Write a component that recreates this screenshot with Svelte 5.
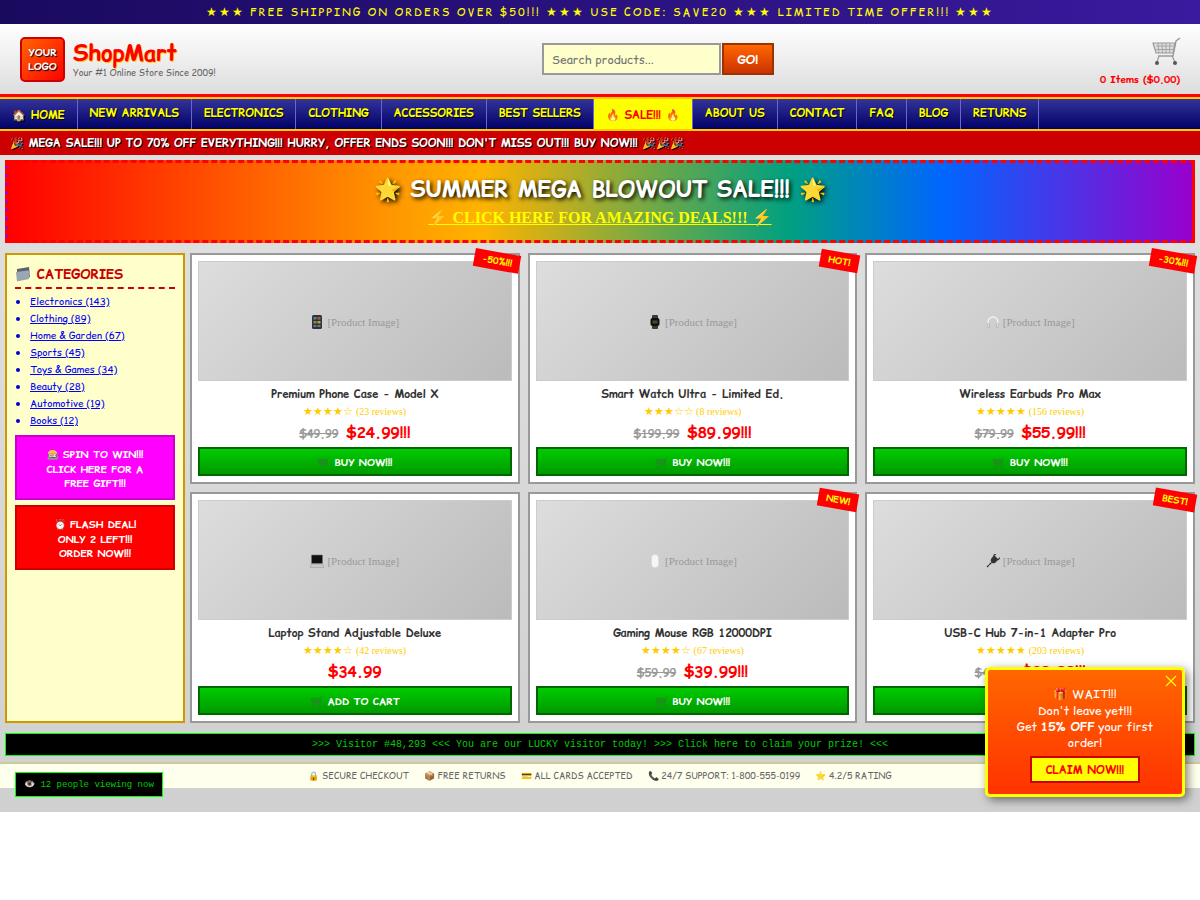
<script>
  const navItems = ['🏠 HOME', 'NEW ARRIVALS', 'ELECTRONICS', 'CLOTHING', 'ACCESSORIES', 'BEST SELLERS', '🔥 SALE!!! 🔥', 'ABOUT US', 'CONTACT', 'FAQ', 'BLOG', 'RETURNS'];

  const categories = ['Electronics (143)', 'Clothing (89)', 'Home & Garden (67)', 'Sports (45)', 'Toys & Games (34)', 'Beauty (28)', 'Automotive (19)', 'Books (12)'];

  const promoParts = ['FREE SHIPPING ON ORDERS OVER $50!!!', 'USE CODE: SAVE20', 'LIMITED TIME OFFER!!!'];

  const products = [
    { icon: 'phone', name: 'Premium Phone Case - Model X', stars: '★★★★☆', reviews: 23, old: '$49.99', price: '$24.99!!!', badge: '-50%!!!', cta: 'BUY NOW!!!' },
    { icon: 'watch', name: 'Smart Watch Ultra - Limited Ed.', stars: '★★★☆☆', reviews: 8, old: '$199.99', price: '$89.99!!!', badge: 'HOT!', cta: 'BUY NOW!!!' },
    { icon: 'phones', name: 'Wireless Earbuds Pro Max', stars: '★★★★★', reviews: 156, old: '$79.99', price: '$55.99!!!', badge: '-30%!!!', cta: 'BUY NOW!!!' },
    { icon: 'laptop', name: 'Laptop Stand Adjustable Deluxe', stars: '★★★★☆', reviews: 42, old: '', price: '$34.99', badge: '', cta: 'ADD TO CART' },
    { icon: 'mouse', name: 'Gaming Mouse RGB 12000DPI', stars: '★★★★☆', reviews: 67, old: '$59.99', price: '$39.99!!!', badge: 'NEW!', cta: 'BUY NOW!!!' },
    { icon: 'plug', name: 'USB-C Hub 7-in-1 Adapter Pro', stars: '★★★★★', reviews: 203, old: '$49.99', price: '$29.99!!!', badge: 'BEST!', cta: 'BUY NOW!!!' }
  ];

  const trust = ['🔒 SECURE CHECKOUT', '📦 FREE RETURNS', '💳 ALL CARDS ACCEPTED', '📞 24/7 SUPPORT: 1-800-555-0199', '⭐ 4.2/5 RATING'];
</script>

{#snippet cart(size, wire, wheel)}
  <svg class="cart-svg" width={size} height={size} viewBox="0 0 30 30" fill="none">
    <path d="M29 3 L25 6 L22 21 H7" stroke={wire} stroke-width="1.4" />
    <path d="M2 8 H24 L22 18 H5 Z" fill={wire} fill-opacity="0.25" stroke={wire} stroke-width="1.2" />
    <path d="M7 8 L8 18 M11 8 L11.5 18 M15 8 L15 18 M19 8 L18.5 18 M5 11 H23 M5 14.5 H22.5" stroke={wire} stroke-width="0.8" />
    <path d="M8 21 L6 27 M21 21 L24 27" stroke={wire} stroke-width="1.2" />
    <circle cx="6" cy="28" r="2" fill={wheel} />
    <circle cx="24" cy="28" r="2" fill={wheel} />
  </svg>
{/snippet}

{#snippet productIcon(kind)}
  <svg class="product-svg" width="14" height="14" viewBox="0 0 14 14">
    {#if kind === 'phone'}
      <rect x="2" y="0" width="10" height="14" rx="1.5" fill="#333" />
      <rect x="3.5" y="2" width="3" height="2.5" fill="#5a7fa8" />
      <rect x="7.5" y="2" width="3" height="2.5" fill="#a85a4a" />
      <rect x="3.5" y="6" width="3" height="2.5" fill="#6a9a5a" />
      <rect x="7.5" y="6" width="3" height="2.5" fill="#c0a040" />
      <rect x="3.5" y="10" width="3" height="2" fill="#7a6a9a" />
      <rect x="7.5" y="10" width="3" height="2" fill="#4a8a8a" />
    {:else if kind === 'watch'}
      <rect x="4" y="0" width="6" height="14" rx="1" fill="#3a3a3a" />
      <rect x="2.5" y="3" width="9" height="8" rx="2" fill="#111" />
      <rect x="4.5" y="5.5" width="5" height="3" fill="#4a4a2a" />
    {:else if kind === 'phones'}
      <path d="M2 10 V7 A5 5 0 0 1 12 7 V10" fill="none" stroke="#f2f2f2" stroke-width="1.4" />
      <path d="M1.5 8.5 L3.5 9 L3.5 13 L2 12.5 Z M12.5 8.5 L10.5 9 L10.5 13 L12 12.5 Z" fill="#ececec" stroke="#999" stroke-width="0.5" />
    {:else if kind === 'laptop'}
      <rect x="1.5" y="1" width="11" height="8.5" rx="0.6" fill="#111" stroke="#777" stroke-width="0.6" />
      <path d="M1.5 10 H12.5 L14 13.5 H0 Z" fill="#c8c8c8" stroke="#888" stroke-width="0.4" />
    {:else if kind === 'mouse'}
      <rect x="3.5" y="0.5" width="7" height="13" rx="3.5" fill="#f6f6f6" stroke="#d8d8d8" stroke-width="0.5" />
    {:else}
      <path d="M8 1 L12.5 5.5 L9 9 A3 3 0 0 1 5 5 Z" fill="#333" />
      <path d="M7.5 1.5 L10 0 M12 6 L14 3.5 M5.5 8.5 L1 13" stroke="#333" stroke-width="1.2" />
      <path d="M2 10 L4 12" stroke="#bbb" stroke-width="1" />
    {/if}
  </svg>
{/snippet}

<div class="page">
  <div class="promo">
    <span class="promo-stars">★★★</span>
    {#each promoParts as part}
      {part}{' '}<span class="promo-stars">★★★</span>{' '}
    {/each}
  </div>

  <header class="header">
    <div class="brand">
      <div class="logo">YOUR<br />LOGO</div>
      <div>
        <div class="shop-name">ShopMart</div>
        <div class="tagline">Your #1 Online Store Since 2009!</div>
      </div>
    </div>
    <div class="search">
      <input type="text" placeholder="Search products..." />
      <button>GO!</button>
    </div>
    <div class="cart">
      <div class="cart-icon">{@render cart(30, '#9a9a9a', '#555')}</div>
      <div class="cart-count">0 Items ($0.00)</div>
    </div>
  </header>

  <nav class="nav">
    {#each navItems as item, i}
      <a href="#top" class:sale={i === 6} class:emoji={i === 0 || i === 6}>{item}</a>
    {/each}
  </nav>

  <div class="sale-strip">🎉 MEGA SALE!!! UP TO 70% OFF EVERYTHING!!! HURRY, OFFER ENDS SOON!!! DON'T MISS OUT!!! BUY NOW!!! 🎉🎉🎉</div>

  <div class="banner">
    <div class="banner-title">🌟 SUMMER MEGA BLOWOUT SALE!!! 🌟</div>
    <a href="#top" class="banner-link">⚡ CLICK HERE FOR AMAZING DEALS!!! ⚡</a>
  </div>

  <div class="content">
    <aside class="sidebar">
      <h3>
        <svg class="folder" width="16" height="16" viewBox="0 0 16 16">
          <path d="M2 3 L14 1 L15 11 L2 15 Z" fill="#5a6470" />
          <path d="M1 6 L13 4.5 L15 5 L14 13 L2 15.5 Z" fill="#9aa6b2" />
        </svg>
        CATEGORIES
      </h3>
      <ul>
        {#each categories as cat}
          <li><a href="#top">{cat}</a></li>
        {/each}
      </ul>
      <div class="side-ad spin">🎰 SPIN TO WIN!!!<br />CLICK HERE FOR A<br />FREE GIFT!!!</div>
      <div class="side-ad flash">⏰ FLASH DEAL!<br />ONLY 2 LEFT!!!<br />ORDER NOW!!!</div>
    </aside>

    <main class="grid">
      {#each products as p}
        <div class="card">
          {#if p.badge}<span class="badge">{p.badge}</span>{/if}
          <div class="image">{@render productIcon(p.icon)} [Product Image]</div>
          <div class="name">{p.name}</div>
          <div class="rating"><span class="stars">{p.stars}</span> ({p.reviews} reviews)</div>
          <div class="prices">
            {#if p.old}<span class="old">{p.old}</span>{/if}
            <span class="price">{p.price}</span>
          </div>
          <button class="buy">{@render cart(13, '#2f7d2f', '#2f7d2f')} {p.cta}</button>
        </div>
      {/each}
    </main>
  </div>

  <div class="ticker">&gt;&gt;&gt; Visitor #48,293 &lt;&lt;&lt; You are our LUCKY visitor today! &gt;&gt;&gt; Click here to claim your prize! &lt;&lt;&lt;</div>

  <div class="trust">
    {#each trust as t}
      <span>{t}</span>
    {/each}
  </div>

  <div class="viewers">👁️ 12 people viewing now</div>

  <div class="popup">
    <svg class="close" width="12" height="12" viewBox="0 0 12 12">
      <path d="M1 1 L11 11 M11 1 L1 11" stroke="#ffff00" stroke-width="1.3" />
    </svg>
    <div class="popup-title">🎁 WAIT!!!</div>
    <div class="popup-text">Don't leave yet!!!<br />Get <b>15% OFF</b> your first order!</div>
    <button class="claim">CLAIM NOW!!!</button>
  </div>
</div>

<style>
  :global(body) {
    background: #fff;
  }

  .page {
    position: relative;
    font-family: 'Comic Relief', 'Comic Neue', cursive;
    background: linear-gradient(180deg, #e4e4e4, #d0d0d0);
    padding-bottom: 24px;
    overflow: hidden;
  }

  .promo {
    height: 24px;
    line-height: 24px;
    text-align: center;
    color: #ffff00;
    font-size: 11px;
    letter-spacing: 2px;
    background: linear-gradient(90deg, #1a0a5e, #3a1a9e);
  }

  .promo-stars {
    font-size: 11.8px;
  }

  .header {
    height: 70px;
    padding: 0 20px;
    display: flex;
    align-items: center;
    justify-content: space-between;
    background: linear-gradient(180deg, #fff, #ddd);
    border-bottom: 3px solid #ff0000;
  }

  .brand {
    display: flex;
    align-items: center;
    gap: 8px;
  }

  .logo {
    width: 45px;
    height: 45px;
    box-sizing: border-box;
    border: 2px solid #cc0000;
    border-radius: 5px;
    background: linear-gradient(135deg, #ff6600, #ff0000);
    color: #fff;
    font-size: 10px;
    font-weight: bold;
    line-height: 14px;
    text-align: center;
    padding-top: 6px;
    text-shadow: 1px 1px 1px #000;
  }

  .shop-name {
    font-size: 22px;
    font-weight: bold;
    line-height: 28px;
    color: #ff0000;
    text-shadow: 1px 1px 0 #ffcc00;
  }

  .tagline {
    font-size: 9px;
    line-height: 13px;
    color: #666;
  }

  .search {
    display: flex;
    gap: 1px;
  }

  .search input {
    width: 179px;
    height: 32px;
    box-sizing: border-box;
    border: 2px solid #999;
    background: #ffffcc;
    padding: 0 8px;
    font-family: inherit;
    font-size: 12px;
  }

  .search button {
    width: 52px;
    height: 32px;
    border: 2px solid #993300;
    background: linear-gradient(180deg, #ff6600, #cc3300);
    color: #fff;
    font-family: inherit;
    font-size: 12px;
    font-weight: bold;
  }

  .cart {
    margin-top: 2px;
    text-align: right;
  }

  .cart-icon {
    height: 30px;
    margin-right: -1px;
  }

  .cart-count {
    margin-top: 7px;
    font-size: 10px;
    font-weight: bold;
    color: #ff0000;
  }

  .nav {
    display: flex;
    height: 30px;
    background: linear-gradient(180deg, #333399, #000066);
    border-top: 2px solid #ffcc00;
    border-bottom: 2px solid #ffcc00;
  }

  .nav a {
    padding: 0 12px;
    line-height: 28px;
    font-size: 11px;
    font-weight: bold;
    color: #ffff00;
    text-decoration: none;
    text-shadow: 1px 1px 0 #000;
    border-right: 1px solid #6666cc;
  }

  .nav a.emoji {
    line-height: 32px;
  }

  .nav a.sale {
    background: #ffff00;
    color: #ff0000;
    text-shadow: none;
  }

  .sale-strip {
    height: 24px;
    line-height: 25px;
    padding-left: 10px;
    background: #cc0000;
    color: #fff;
    font-size: 11px;
    font-weight: bold;
    text-shadow: 1px 1px 0 #000;
  }

  .banner {
    margin: 5px 5px 0;
    height: 83px;
    box-sizing: border-box;
    border: 3px dashed #ff0000;
    padding-top: 10px;
    text-align: center;
    background: linear-gradient(90deg, #ff0000 0%, #ff9900 33%, #ffb300 40%, #00a080 66%, #0066ff 79%, #9900cc 100%);
  }

  .banner-title {
    font-size: 22px;
    font-weight: bold;
    line-height: 32px;
    color: #fff;
    text-shadow: 2px 2px 4px #000;
  }

  .banner-link {
    display: inline-block;
    margin-top: 3px;
    font-family: 'Liberation Serif', serif;
    font-size: 16px;
    font-weight: bold;
    color: #ffff00;
  }

  .content {
    display: flex;
    gap: 5px;
    margin: 10px 5px 0;
  }

  .sidebar {
    width: 180px;
    flex-shrink: 0;
    box-sizing: border-box;
    border: 2px solid #cc9900;
    background: #ffffcc;
    padding: 8px;
  }

  .sidebar h3 {
    margin: 0 0 4px;
    padding-bottom: 2px;
    font-size: 13px;
    line-height: 22px;
    color: #cc0000;
    border-bottom: 2px dashed #cc0000;
  }

  .folder {
    vertical-align: -3px;
  }

  .sidebar ul {
    margin: 0;
    padding: 0 0 0 15px;
    font-size: 10px;
    color: #0000cc;
  }

  .sidebar li {
    line-height: 17px;
  }

  .sidebar li a {
    color: #0000ff;
  }

  .side-ad {
    margin-top: 5px;
    padding: 10px 5px 7.5px;
    border: 2px solid;
    color: #fff;
    font-size: 10px;
    font-weight: bold;
    line-height: 14.5px;
    text-align: center;
  }

  .spin {
    margin-top: 6px;
    background: #ff00ff;
    border-color: #cc00cc;
  }

  .flash {
    background: #ff0000;
    border-color: #cc0000;
  }

  .grid {
    flex: 1;
    display: grid;
    grid-template-columns: repeat(3, 1fr);
    gap: 8px;
  }

  .card {
    position: relative;
    border: 2px solid #999;
    background: #fff;
    padding: 6px;
    text-align: center;
  }

  .badge {
    position: absolute;
    top: -3px;
    right: -3px;
    padding: 3px 8px;
    background: #ff0000;
    color: #ffff00;
    font-size: 9px;
    font-weight: bold;
    transform: rotate(10deg);
  }

  .image {
    height: 120px;
    box-sizing: border-box;
    border: 1px solid #ccc;
    padding-top: 2px;
    background: linear-gradient(135deg, #ddd, #bbb);
    display: flex;
    align-items: center;
    justify-content: center;
    gap: 3px;
    font-family: 'Liberation Serif', serif;
    font-size: 11px;
    color: #999;
  }

  .name {
    margin-top: 5px;
    font-size: 11px;
    line-height: 16px;
    font-weight: bold;
    color: #333;
  }

  .rating {
    margin-top: 2px;
    font-family: 'Liberation Serif', serif;
    font-size: 10px;
    line-height: 14px;
    color: #ffcc00;
  }

  .stars {
    font-size: 11px;
  }

  .prices {
    margin: 2px 0 4px;
    line-height: 22px;
    height: 22px;
  }

  .old {
    margin-right: 3px;
    font-size: 11px;
    font-weight: bold;
    color: #999;
    text-decoration: line-through;
  }

  .price {
    font-size: 15px;
    font-weight: bold;
    color: #ff0000;
  }

  .buy {
    width: 100%;
    height: 29px;
    border: 2px solid #006600;
    background: linear-gradient(180deg, #00cc00, #009900);
    color: #fff;
    font-family: inherit;
    font-size: 10px;
    font-weight: bold;
  }

  .cart-svg {
    vertical-align: -3px;
  }

  .ticker {
    margin: 10px 5px 0;
    height: 23px;
    box-sizing: border-box;
    border: 1px solid #00ff00;
    background: #000;
    color: #00cc00;
    font-family: 'Liberation Mono', monospace;
    font-size: 10px;
    line-height: 21px;
    text-align: center;
  }

  .trust {
    margin-top: 6px;
    height: 24px;
    border-top: 2px solid #cccc99;
    background: #ffffee;
    display: flex;
    align-items: center;
    justify-content: center;
    gap: 15px;
    font-size: 9px;
    color: #666;
  }

  .viewers {
    position: absolute;
    left: 15px;
    bottom: 15px;
    padding: 6px 8px;
    border: 1px solid #00ff00;
    background: #000;
    color: #00cc00;
    font-family: 'Liberation Mono', monospace;
    font-size: 9px;
  }

  .popup {
    position: absolute;
    right: 15px;
    bottom: 15px;
    width: 200px;
    box-sizing: border-box;
    padding: 14px 10px 11px;
    border: 3px solid #ffff00;
    border-radius: 5px;
    background: linear-gradient(180deg, #ff6600, #ff3300);
    box-shadow: 3px 3px 10px rgba(0, 0, 0, 0.5);
    color: #fff;
    text-align: center;
    font-size: 12px;
  }

  .popup-title {
    line-height: 19px;
  }

  .popup-text {
    line-height: 16px;
  }

  .close {
    position: absolute;
    top: 5px;
    right: 5px;
  }

  .claim {
    margin-top: 5px;
    width: 110px;
    height: 27px;
    border: 2px solid #cc0000;
    background: #ffff00;
    color: #ff0000;
    font-family: inherit;
    font-size: 11px;
    font-weight: bold;
  }
</style>
